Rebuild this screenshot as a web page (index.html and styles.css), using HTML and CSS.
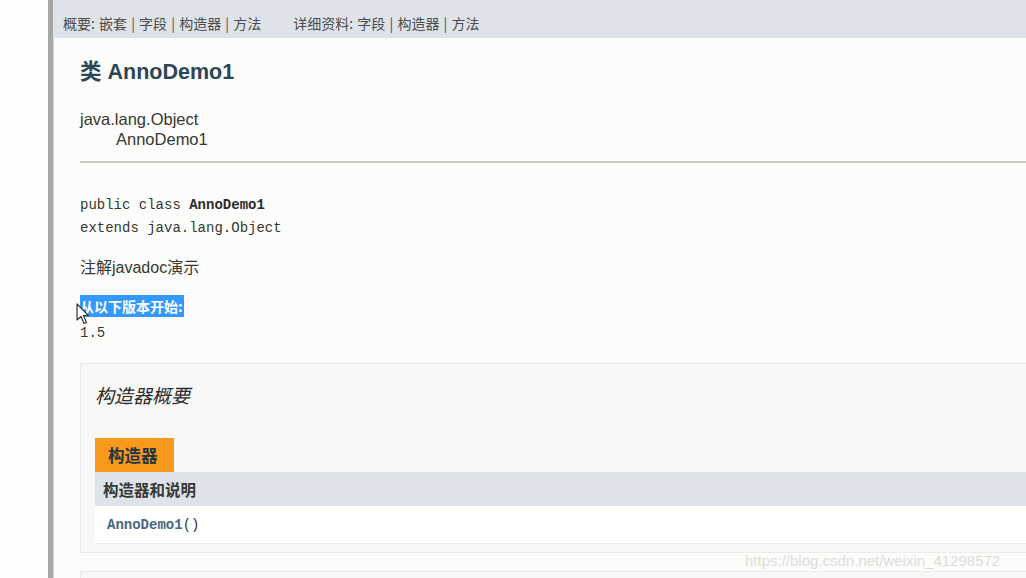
FILE: index.html
```html
<!DOCTYPE html>
<html lang="zh-CN">
<head>
    <meta charset="UTF-8">
    <title>AnnoDemo1</title>
    <link rel="stylesheet" href="styles.css">
</head>
<body>
    <div class="page">
        <div class="gutter"></div>
        <div class="frame">
            <div class="subnav">
                <span>概要:&nbsp;嵌套&nbsp;|&nbsp;字段&nbsp;|&nbsp;构造器&nbsp;|&nbsp;方法</span>
                <span class="detail">详细资料:&nbsp;字段&nbsp;|&nbsp;构造器&nbsp;|&nbsp;方法</span>
            </div>
            <div class="content">
                <h2 class="title">类 AnnoDemo1</h2>
                <div class="inherit">
                    <div>java.lang.Object</div>
                    <div class="sub">AnnoDemo1</div>
                </div>
                <hr class="rule">
                <pre class="sig">public class <b>AnnoDemo1</b>
extends java.lang.Object</pre>
                <div class="block">注解javadoc演示</div>
                <dl class="since">
                    <dt><span class="sel">从以下版本开始:</span></dt>
                    <dd>1.5</dd>
                </dl>
                <div class="summary">
                    <h3>构造器概要</h3>
                    <div class="tab">构造器</div>
                    <table class="members">
                        <tr><th>构造器和说明</th></tr>
                        <tr><td><a href="#">AnnoDemo1</a>()</td></tr>
                    </table>
                </div>
                <div class="summary next"></div>
            </div>
        </div>
    </div>

    <svg class="cursor" width="14" height="22" viewBox="0 0 14 22">
        <path d="M1 1 L1 17 L5 13.5 L8 20.5 L10.5 19.5 L7.5 12.5 L12.5 12.5 Z" fill="#fff" stroke="#333" stroke-width="1.2" stroke-linejoin="round"/>
    </svg>
    <div class="watermark">https://blog.csdn.net/weixin_41298572</div>
</body>
</html>
```

FILE: styles.css
```css
html, body { margin: 0; padding: 0; }
body { width: 1026px; height: 578px; overflow: hidden; background: #fdfefd; font-family: "Liberation Sans", "Noto Sans CJK SC", sans-serif; color: #353833; position: relative; }

.page { display: flex; height: 100%; }
.gutter { width: 48px; flex: none; background: #fdfefd; }
.frame { flex: 1; min-width: 0; border-left: 5px solid #a6a6a6; box-shadow: inset 1px 0 0 #d4d4d4; background: #fcfdfb; }

.subnav { height: 38px; box-sizing: border-box; padding: 14px 0 0 10px; background: #dee3e9; font-size: 14px; line-height: 18px; color: #4c4c4c; font-family: "Noto Sans CJK SC", sans-serif; white-space: nowrap; word-spacing: 1px; }
.subnav .detail { margin-left: 28px; }

.content { padding-left: 27px; }

.title { margin: 21px 0 0; font-size: 21.5px; line-height: 26px; font-weight: bold; color: #2c4557; font-family: "Liberation Sans", "Noto Sans CJK SC", sans-serif; }

.inherit { margin-top: 24px; font-size: 16.5px; line-height: 20px; }
.inherit .sub { padding-left: 36px; }

.rule { margin: 12px 0 0; border: 0; height: 2px; background: #c9cbc7; }

.sig { margin: 31px 0 0; font-family: "Liberation Mono", monospace; font-size: 14px; line-height: 23px; color: #353833; }
.sig b { color: #2c2c2c; }

.block { margin-top: 17px; font-size: 16px; line-height: 22px; font-family: "Liberation Sans", "Noto Sans CJK SC", sans-serif; }

.since { margin: 17px 0 0; }
.since dt { font-size: 14px; line-height: 20px; font-weight: bold; font-family: "Noto Sans CJK SC", sans-serif; }
.since .sel { background: #3399ff; color: #fff; padding: 1px 1px 1px 0; }
.since dd { margin: 7px 0 0; font-family: "Liberation Mono", monospace; font-size: 14px; line-height: 20px; }

.summary { margin: 20px -12px 0 0; padding: 19px 0 8px 14px; background: #f7f8f6; border: 1px solid #ebecea; }
.summary h3 { margin: 0; font-size: 19px; line-height: 24px; font-style: italic; font-weight: normal; color: #2c2c2c; font-family: "Noto Sans CJK SC", sans-serif; }
.summary .tab { display: inline-block; margin-top: 31px; width: 79px; height: 34px; box-sizing: border-box; padding: 6px 0 0 13px; background: #f8981d; color: #253441; font-weight: bold; font-size: 16.5px; line-height: 22px; font-family: "Noto Sans CJK SC", sans-serif; vertical-align: top; }

.members { width: 100%; border-collapse: collapse; }
.members th { height: 34px; padding: 0 8px; text-align: left; background: #dee3e9; font-size: 15.5px; font-weight: bold; color: #353833; font-family: "Noto Sans CJK SC", sans-serif; }
.members td { height: 37px; padding: 0 12px; background: #fff; border-bottom: 1px solid #ececec; font-family: "Liberation Mono", monospace; font-size: 14px; }
.members td a { color: #4a6782; text-decoration: none; font-weight: bold; }

.summary.next { margin-top: 18px; height: 30px; padding: 0; }

.cursor { position: absolute; left: 76px; top: 303px; }
.watermark { position: absolute; left: 745px; top: 551px; font-size: 15px; line-height: 20px; color: #dadcda; text-shadow: 0 0 1px #fff; }
```
